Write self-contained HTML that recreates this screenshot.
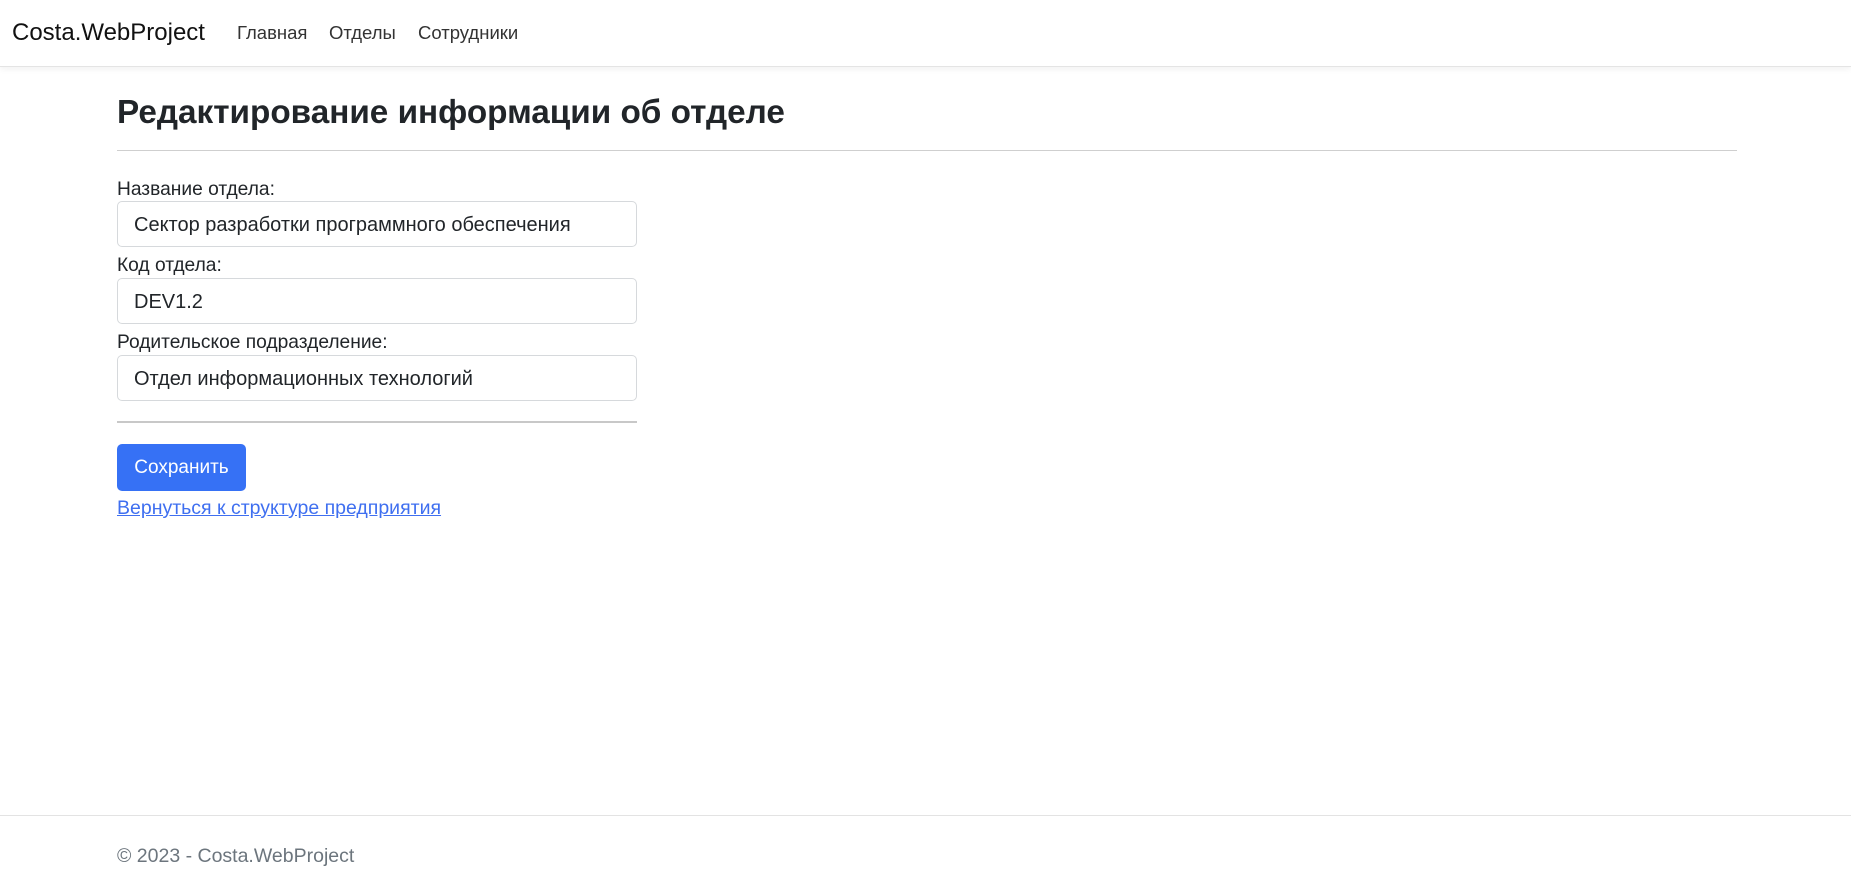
<!DOCTYPE html>
<html><head><meta charset="utf-8"><style>
*{box-sizing:border-box;margin:0;padding:0}
body{width:1851px;height:882px;position:relative;background:#fff;font-family:"Liberation Sans",Arial,sans-serif;color:#212529;font-size:19px;overflow:hidden}
.nav{position:absolute;left:0;top:0;width:1851px;height:67px;border-bottom:1px solid #e4e4e4;box-shadow:0 2px 6px rgba(0,0,0,.06);}
.brand{position:absolute;left:12px;top:18px;font-size:24px;line-height:30px;color:#111}
.nl{position:absolute;top:21px;font-size:18.5px;line-height:24px;color:#333}
h2{position:absolute;left:117px;top:90px;font-size:33.3px;font-weight:bold;line-height:46px;color:#212529}
.hr1{position:absolute;left:117px;top:150px;width:1620px;height:1px;background:#cfcfcf}
.lbl{position:absolute;left:117px;font-size:19.2px;line-height:24px}
.inp{position:absolute;left:117px;width:520px;height:46px;border:1px solid #d6d9dc;border-radius:5px;padding-left:16px;line-height:46px;font-size:20px}
.hr2{position:absolute;left:117px;top:421px;width:520px;height:2px;background:#c8c8c8}
.btn{position:absolute;left:117px;top:444px;width:129px;height:47px;background:#3671f5;color:#fff;border-radius:5px;font-size:19px;line-height:48px;text-align:center}
.link{position:absolute;left:117px;top:496px;font-size:19.5px;line-height:24px;color:#3f6ff0;text-decoration:underline}
.fb{position:absolute;left:0;top:815px;width:1851px;height:1px;background:#e3e3e3}
.ft{position:absolute;left:117px;top:844px;font-size:19.5px;line-height:24px;color:#6c757d}
</style></head><body>
<div class="nav">
<div class="brand">Costa.WebProject</div>
<div class="nl" style="left:237px">Главная</div>
<div class="nl" style="left:329px">Отделы</div>
<div class="nl" style="left:418px">Сотрудники</div>
</div>
<h2>Редактирование информации об отделе</h2>
<div class="hr1"></div>
<div class="lbl" style="top:178px">Название отдела:</div>
<div class="inp" style="top:201px">Сектор разработки программного обеспечения</div>
<div class="lbl" style="top:254px">Код отдела:</div>
<div class="inp" style="top:278px">DEV1.2</div>
<div class="lbl" style="top:331px">Родительское подразделение:</div>
<div class="inp" style="top:355px">Отдел информационных технологий</div>
<div class="hr2"></div>
<div class="btn">Сохранить</div>
<div class="link">Вернуться к структуре предприятия</div>
<div class="fb"></div>
<div class="ft">© 2023 - Costa.WebProject</div>
</body></html>
